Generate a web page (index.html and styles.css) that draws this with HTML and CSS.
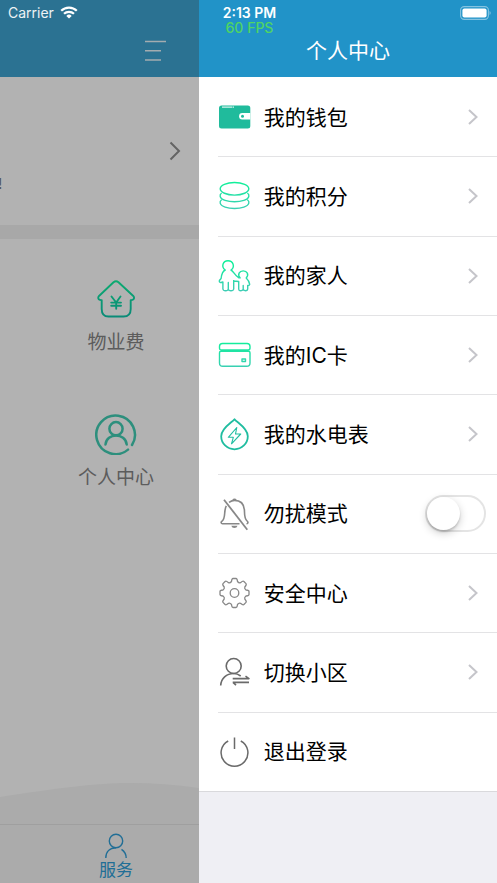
FILE: index.html
```html
<!DOCTYPE html>
<html lang="zh-CN">
<head>
<meta charset="utf-8">
<meta name="viewport" content="width=device-width, initial-scale=1">
<title>个人中心</title>
<link rel="stylesheet" href="styles.css">
</head>
<body>
<svg class="defs" aria-hidden="true">
  <defs>
    <linearGradient id="mint" gradientUnits="userSpaceOnUse" x1="0" y1="2" x2="0" y2="30">
      <stop offset="0" stop-color="#10f09a"/><stop offset="1" stop-color="#3ccdb4"/>
    </linearGradient>
    <linearGradient id="house" gradientUnits="userSpaceOnUse" x1="0" y1="2" x2="0" y2="40">
      <stop offset="0" stop-color="#0cab70"/><stop offset="1" stop-color="#0a8a78"/>
    </linearGradient>
  </defs>
</svg>
<div class="screen">
  <div class="status">
    <span class="carrier">Carrier
      <svg width="18" height="13" viewBox="0 0 18 13" fill="none" stroke="#fff" stroke-width="2.2"><path d="M1.2 4.8a11 11 0 0 1 15.6 0M4 7.8a7.2 7.2 0 0 1 10 0"/><path d="M9 12.5 6.3 9.9a3.9 3.9 0 0 1 5.4 0Z" fill="#fff" stroke="none"/></svg>
    </span>
    <span class="clock"><b>2:13 PM</b><span class="fps">60 FPS</span></span>
    <svg class="battery" width="31" height="14" viewBox="0 0 31 14"><rect x=".6" y=".6" width="27.8" height="12.8" rx="3.6" fill="none" stroke="#fff" stroke-opacity=".45" stroke-width="1.1"/><rect x="2.4" y="2.4" width="24.2" height="9.2" rx="2" fill="#fff"/><path d="M29.6 5c1.3.6 1.3 3.400 0 4Z" fill="#fff" fill-opacity=".55"/></svg>
  </div>

  <main class="page">
    <header class="page-head">
      <button class="menu" aria-label="菜单"><svg width="22" height="22" viewBox="0 0 22 22" stroke="#a3acb0" stroke-width="1.500"><path d="M0 1.500h21M0 10.700h16M0 20h16"/></svg></button>
    </header>
    <section class="card">
      <a class="card-link" href="#" aria-label="详情"><svg width="12" height="20" viewBox="0 0 12 20" fill="none" stroke="#646464" stroke-width="2"><path d="m1.500 1.500 8.500 8.500-8.500 8.500"/></svg></a>
      <p class="note">!</p>
    </section>
    <section class="services">
      <a class="tile" href="#">
        <svg width="42" height="42" viewBox="0 0 42 42" fill="none" stroke="url(#house)" stroke-width="1.900" stroke-linejoin="round" stroke-linecap="round"><path d="M18.500 4.300q2.500-2 5 0L38 17.700q2 2.300.3 3.700-1 .9-2.600.7V31q0 7.500-7.200 7.500h-15Q6.700 38.500 6.700 31v-8.900Q5 22.300 4 21.400q-1.700-1.400.3-3.700Z"/><path d="M16.500 18.500l4.700 6 4.300-6M21.200 24.500v6.300M16.200 24.600h9.800M16.200 27.800h9.800"/></svg>
        <span>物业费</span>
      </a>
      <a class="tile" href="#">
        <svg width="42" height="42" viewBox="0 0 42 42" fill="none" stroke="#2d8f7d" stroke-width="2.500" stroke-linecap="round"><path d="M33 36.600A19.300 19.300 0 1 1 37 32"/><circle cx="21" cy="15.700" r="6.600"/><path d="M10.500 31.500c1-12 20-12 21.200 0"/></svg>
        <span>个人中心</span>
      </a>
      <svg class="wave" viewBox="0 0 199 44" preserveAspectRatio="none"><path d="M0 17C60 8 95 3 131 3q33 0 68 5v36H0Z" fill="#ababab"/></svg>
    </section>
    <nav class="tabs">
      <a class="tab" href="#">
        <svg width="24" height="26" viewBox="0 0 24 26" fill="none" stroke="#216e96" stroke-width="1.400"><circle cx="12" cy="8" r="6.700"/><path d="M1.800 25C1.800 18.500 6 14.800 12 14.700M17.500 16.300q4.700 3.200 4.700 8.700"/></svg>
        <span>服务</span>
      </a>
    </nav>
  </main>

  <aside class="drawer">
    <header class="drawer-head"><h1>个人中心</h1></header>
    <ul class="list">
      <li><a class="row" href="#">
        <svg class="icon" viewBox="0 0 32 32"><rect x="1" y="4.500" width="31.300" height="23" rx="2.500" fill="#20bb9c"/><path d="M4 6.200h10.500M15 6.200h1" stroke="#d6f5ee" stroke-width="1.200"/><path d="M32.300 12h-8a3.200 3.200 0 0 0 0 6.400h8Z" fill="#fff"/><circle cx="24.500" cy="15.200" r="1.500" fill="#20bb9c"/></svg>
        <span>我的钱包</span><svg class="chevron" viewBox="0 0 10 18"><path d="m1 2 7.500 7L1 16"/></svg></a></li>
      <li><a class="row" href="#">
        <svg class="icon mint" viewBox="0 0 32 32"><ellipse cx="16.500" cy="8.800" rx="14.300" ry="6.300"/><path d="M3.600 13q-2 1.400-1.400 3.500c1.600 7 27 7 28.600 0q.6-2.100-1.400-3.500M3.600 19.700q-2 1.400-1.400 3.500c1.600 7 27 7 28.600 0q.6-2.100-1.400-3.500"/></svg>
        <span>我的积分</span><svg class="chevron" viewBox="0 0 10 18"><path d="m1 2 7.500 7L1 16"/></svg></a></li>
      <li><a class="row" href="#">
        <svg class="icon mint" viewBox="0 0 32 32"><path d="M15.700 20V29c-.4 2.400-5 2.400-5.400 0v-6.500V29c-.4 2.400-5 2.400-5.400 0v-7c-2.400 1-4.100.4-3.500-1.500l1.700-2C3.500 15 4.500 11 7.300 10C2.900 7 4.700.8 10 .8S17.300 7 13 10c2.600 1.300 3.800 5.600 7.600 7.700l1.600.2c-3.200-3.300-.8-7 3-7s6.200 3.700 3 7c1.600 1.500 3.200 4 3.500 6.500-.3 1-1 1.200-2 1v3.800c-.3 2.100-4.100 2.100-4.500 0V25.500V29.200c-.4 2.100-4.300 2.100-4.500 0v-7.700l-5-.5"/></svg>
        <span>我的家人</span><svg class="chevron" viewBox="0 0 10 18"><path d="m1 2 7.500 7L1 16"/></svg></a></li>
      <li><a class="row" href="#">
        <svg class="icon mint" viewBox="0 0 32 32"><path d="M3.500 11q-2 0-2-2V7.500q0-3 3-3H29q3 0 3 3V9q0 2-2 2ZM3 12.300h27.500q1.500 0 1.500 1.500V24q0 3.300-3.300 3.300H4.800q-3.300 0-3.300-3.300V13.800q0-1.500 1.500-1.500Z"/><path d="M24 20h3.500v2.500H24Z"/></svg>
        <span>我的IC卡</span><svg class="chevron" viewBox="0 0 10 18"><path d="m1 2 7.500 7L1 16"/></svg></a></li>
      <li><a class="row" href="#">
        <svg class="icon teal" viewBox="0 0 32 32"><path stroke-width="1.800" d="M16.500 1.200C19 4.500 29.800 10 29.800 18.200a13.300 13.100 0 0 1-26.600 0C3.200 10 14 4.500 16.500 1.200Z"/><path stroke-width="1.100" d="m18.800 9.500-8.500 9.800h5l-1.800 6.500 9.200-9.800h-5.200Z"/></svg>
        <span>我的水电表</span><svg class="chevron" viewBox="0 0 10 18"><path d="m1 2 7.500 7L1 16"/></svg></a></li>
      <li class="row">
        <svg class="icon gray" viewBox="0 0 32 32"><path stroke-width="1.600" d="M11 4.400q3-2 5.500-2c7 0 10 4.800 10 11.600 0 5 .5 7.500 3 9.500 1 1.200 0 2.200-1 2.200M21.500 25.700h-17c-1.500 0-1.800-1.400-.7-2.300 4.500-3 1.500-10 4.500-15.500M14.700 2.400q1.800-2.200 3.600 0"/><path stroke-width="1.800" d="M6 1.700 29.300 31.800"/><path d="M13.300 27.700h6.200q-.6 2.400-3.100 2.400t-3.100-2.400Z" fill="#888" stroke="none"/></svg>
        <label for="quiet">勿扰模式</label><input class="switch" id="quiet" type="checkbox" role="switch"></li>
      <li><a class="row" href="#">
        <svg class="icon gray" viewBox="0 0 32 32"><g transform="translate(16.500 16)" stroke-width="1.300"><path d="M-3-11.500Q-2.700-14.500-1.500-14.500H1.500Q2.700-14.500 3-11.500Q4.400-9.700 6-10.300Q8.500-12.400 9.400-11.500L11.500-9.400Q12.400-8.500 10.300-6Q9.700-4.400 11.500-3Q14.500-2.700 14.500-1.500V1.500Q14.500 2.700 11.500 3Q9.700 4.400 10.300 6Q12.400 8.500 11.500 9.400L9.400 11.500Q8.500 12.400 6 10.300Q4.400 9.700 3 11.500Q2.700 14.500 1.500 14.500H-1.500Q-2.700 14.500-3 11.500Q-4.400 9.700-6 10.300Q-8.500 12.400-9.400 11.500L-11.500 9.400Q-12.400 8.500-10.300 6Q-9.700 4.400-11.500 3Q-14.500 2.700-14.500 1.500V-1.500Q-14.500-2.700-11.500-3Q-9.700-4.400-10.300-6Q-12.400-8.500-11.500-9.400L-9.400-11.500Q-8.500-12.400-6-10.300Q-4.400-9.700-3-11.500Z"/><circle r="4.300"/></g></svg>
        <span>安全中心</span><svg class="chevron" viewBox="0 0 10 18"><path d="m1 2 7.500 7L1 16"/></svg></a></li>
      <li><a class="row" href="#">
        <svg class="icon dark" viewBox="0 0 32 32"><circle cx="15.700" cy="10" r="7.500"/><path d="M2.700 29.500C3 22.500 8.500 17.500 15.700 17.500q3.700 0 7 2.500M14.700 26.400H31M14.700 22.600H31l-3.500-2.400M18 29.200l-3-2.800"/></svg>
        <span>切换小区</span><svg class="chevron" viewBox="0 0 10 18"><path d="m1 2 7.500 7L1 16"/></svg></a></li>
      <li><a class="row" href="#">
        <svg class="icon dark" viewBox="0 0 32 32"><path stroke-width="1.500" d="M10.200 5a13.400 13.400 0 1 0 12.600 0M16.500 1.500V13"/></svg>
        <span>退出登录</span></a></li>
    </ul>
  </aside>
</div>
</body>
</html>
```
FILE: styles.css
```css
* { box-sizing: border-box; }

body {
  margin: 0;
  font-family: Inter, "Noto Sans CJK SC", sans-serif;
  color: #000;
}

a { color: inherit; text-decoration: none; }
svg { display: block; flex: none; }
.defs { position: absolute; width: 0; height: 0; }

.screen {
  position: relative;
  display: grid;
  grid-template-columns: 2fr 3fr;
  min-height: 100vh;
}

/* Status bar floats over both headers */
.status {
  position: absolute;
  inset: 0 0 auto 0;
  display: grid;
  grid-template-columns: 1fr auto 1fr;
  align-items: start;
  padding: 6px 6px 0 8px;
  color: #fff;
  font-size: 14px;
  line-height: 14px;
  pointer-events: none;
}
.carrier { display: flex; gap: 6px; color: #eef3f5; }
.clock { display: grid; justify-items: center; gap: 1px; }
.clock b { font-weight: 600; }
.fps { color: #4fd463; font-weight: 500; }
.battery { justify-self: end; }

.page {
  display: flex;
  flex-direction: column;
  overflow: hidden;
  background: #b2b2b2;
}
.page-head {
  display: flex;
  justify-content: flex-end;
  align-items: flex-end;
  height: 77px;
  padding: 0 32px 15px;
  background: #2b7292;
}
.menu { padding: 0; border: 0; background: none; }
.card {
  display: flex;
  flex-direction: column;
  height: 162px;
  padding-top: 64px;
  border-bottom: 14px solid #a8a8a8;
}
.card-link { align-self: flex-end; margin-right: 18px; }
.note {
  margin: 13px 0 0 -2px;
  font-size: 15px;
  line-height: 20px;
  color: #555;
}
.services {
  flex: 1;
  display: flex;
  flex-direction: column;
  gap: 57px;
  padding-top: 39px;
}
.tile {
  display: flex;
  flex-direction: column;
  align-items: center;
  gap: 10px;
  padding-left: 33px;
  color: #5c5c5c;
  font-size: 19px;
  line-height: 26px;
}
.wave { width: 100%; height: 44px; margin-top: auto; }
.tabs {
  height: 59px;
  padding: 8px 0 0 33px;
  border-top: 1px solid #9f9f9f;
  background: #ababab;
}
.tab {
  display: flex;
  flex-direction: column;
  align-items: center;
  color: #216e96;
  font-size: 17px;
  line-height: 22px;
}

.drawer {
  display: flex;
  flex-direction: column;
  padding-bottom: 91px;
  background: #efeff4;
}
.drawer-head {
  display: flex;
  justify-content: center;
  align-items: flex-end;
  height: 77px;
  padding-bottom: 10px;
  background: #2193c8;
  color: #fff;
}
h1 { margin: 0; font-size: 21px; font-weight: 400; line-height: 32px; }

.list {
  flex: 1;
  display: grid;
  grid-auto-rows: 1fr;
  margin: 0;
  padding: 0 0 0 19px;
  border-bottom: 1px solid #d9d9dc;
  background: #fff;
  list-style: none;
}
.list li { display: flex; border-top: 1px solid #e3e3e5; }
.list li:first-child { border-top-color: transparent; }
.row {
  flex: 1;
  display: flex;
  align-items: center;
  gap: 14px;
  padding-right: 19px;
  font-size: 21px;
  line-height: 30px;
}
li.row { padding-right: 11px; }
.row span, .row label { flex: 1; padding-top: 1px; }

.icon {
  width: 32px;
  height: 32px;
  overflow: visible;
  fill: none;
  stroke-width: 1.4;
  stroke-linejoin: round;
}
.mint { stroke: url(#mint); }
.teal { stroke: #20bda0; }
.gray { stroke: #888; }
.dark { stroke: #6a6a6a; stroke-width: 1.6; }
.chevron {
  width: 10px;
  height: 18px;
  fill: none;
  stroke: #c5c5ca;
  stroke-width: 2;
}

.switch {
  appearance: none;
  width: 61px;
  height: 37px;
  margin: 0;
  border: 2px solid #e4e4e4;
  border-radius: 19px;
  background: #fff;
}
.switch::before {
  content: "";
  display: block;
  width: 33px;
  height: 33px;
  border-radius: 50%;
  background: #fff;
  box-shadow: 0 3px 8px rgba(0, 0, 0, .2), 0 2px 2px rgba(0, 0, 0, .15);
}
.switch:checked { background: #4cd964; }
.switch:checked::before { margin-left: auto; }
```
